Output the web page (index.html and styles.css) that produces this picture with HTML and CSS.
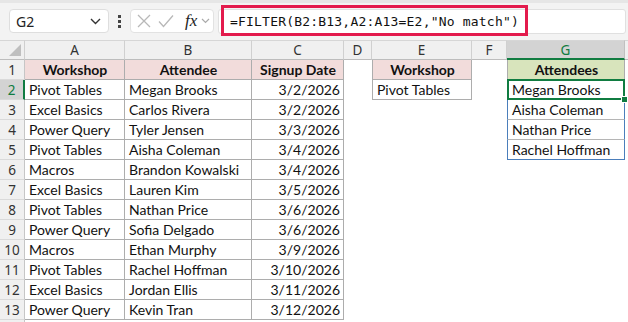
FILE: index.html
```html
<!DOCTYPE html>
<html>
<head>
<meta charset="utf-8">
<link rel="stylesheet" href="styles.css">
</head>
<body>
<div class="toolbar">
  <div class="namebox"><span>G2</span>
    <svg width="11" height="7" viewBox="0 0 11 7"><path d="M1 1 L5.5 5.5 L10 1" fill="none" stroke="#333" stroke-width="1.4"/></svg>
  </div>
  <div class="dots"><i></i><i></i><i></i></div>
  <div class="fxbtns">
    <svg width="14" height="14" viewBox="0 0 14 14"><path d="M1 1 L13 13 M13 1 L1 13" stroke="#b8b8b8" stroke-width="1.3" fill="none"/></svg>
    <svg width="16" height="14" viewBox="0 0 16 14"><path d="M1 7.5 L5.5 12.5 L15 1.5" stroke="#b8b8b8" stroke-width="1.3" fill="none"/></svg>
    <span class="fx">fx</span>
    <svg width="9" height="6" viewBox="0 0 9 6"><path d="M1 1 L4.5 4.5 L8 1" fill="none" stroke="#aaa" stroke-width="1.2"/></svg>
  </div>
  <div class="formula">=FILTER(B2:B13,A2:A13=E2,"No match")</div>
  <div class="highlight"></div>
</div>
<div class="sheet">
  <div class="corner"><span class="tri"></span></div>
  <div class="ch">A</div><div class="ch">B</div><div class="ch">C</div><div class="ch">D</div><div class="ch">E</div><div class="ch">F</div><div class="ch sel">G</div><div class="ch end"></div>

  <div class="rh">1</div><div class="c t h1">Workshop</div><div class="c t h1">Attendee</div><div class="c t h1">Signup Date</div><div class="c"></div><div class="c t tl h1">Workshop</div><div class="c"></div><div class="c t tl hg">Attendees</div><div class="c"></div>

  <div class="rh sel">2</div><div class="c t">Pivot Tables</div><div class="c t">Megan Brooks</div><div class="c t r">3/2/2026</div><div class="c"></div><div class="c t tl">Pivot Tables</div><div class="c"></div><div class="c sp active">Megan Brooks</div><div class="c"></div>

  <div class="rh">3</div><div class="c t">Excel Basics</div><div class="c t">Carlos Rivera</div><div class="c t r">3/2/2026</div><div class="c"></div><div class="c"></div><div class="c"></div><div class="c sp">Aisha Coleman</div><div class="c"></div>

  <div class="rh">4</div><div class="c t">Power Query</div><div class="c t">Tyler Jensen</div><div class="c t r">3/3/2026</div><div class="c"></div><div class="c"></div><div class="c"></div><div class="c sp">Nathan Price</div><div class="c"></div>

  <div class="rh">5</div><div class="c t">Pivot Tables</div><div class="c t">Aisha Coleman</div><div class="c t r">3/4/2026</div><div class="c"></div><div class="c"></div><div class="c"></div><div class="c sp last">Rachel Hoffman</div><div class="c"></div>

  <div class="rh">6</div><div class="c t">Macros</div><div class="c t">Brandon Kowalski</div><div class="c t r">3/4/2026</div><div class="c"></div><div class="c"></div><div class="c"></div><div class="c"></div><div class="c"></div>

  <div class="rh">7</div><div class="c t">Excel Basics</div><div class="c t">Lauren Kim</div><div class="c t r">3/5/2026</div><div class="c"></div><div class="c"></div><div class="c"></div><div class="c"></div><div class="c"></div>

  <div class="rh">8</div><div class="c t">Pivot Tables</div><div class="c t">Nathan Price</div><div class="c t r">3/6/2026</div><div class="c"></div><div class="c"></div><div class="c"></div><div class="c"></div><div class="c"></div>

  <div class="rh">9</div><div class="c t">Power Query</div><div class="c t">Sofia Delgado</div><div class="c t r">3/6/2026</div><div class="c"></div><div class="c"></div><div class="c"></div><div class="c"></div><div class="c"></div>

  <div class="rh">10</div><div class="c t">Macros</div><div class="c t">Ethan Murphy</div><div class="c t r">3/9/2026</div><div class="c"></div><div class="c"></div><div class="c"></div><div class="c"></div><div class="c"></div>

  <div class="rh">11</div><div class="c t">Pivot Tables</div><div class="c t">Rachel Hoffman</div><div class="c t r">3/10/2026</div><div class="c"></div><div class="c"></div><div class="c"></div><div class="c"></div><div class="c"></div>

  <div class="rh">12</div><div class="c t">Excel Basics</div><div class="c t">Jordan Ellis</div><div class="c t r">3/11/2026</div><div class="c"></div><div class="c"></div><div class="c"></div><div class="c"></div><div class="c"></div>

  <div class="rh">13</div><div class="c t">Power Query</div><div class="c t">Kevin Tran</div><div class="c t r">3/12/2026</div><div class="c"></div><div class="c"></div><div class="c"></div><div class="c"></div><div class="c"></div>

  <div class="rh"></div><div class="c"></div><div class="c"></div><div class="c"></div><div class="c"></div><div class="c"></div><div class="c"></div><div class="c"></div><div class="c"></div>
</div>
</body>
</html>
```

FILE: styles.css
```css
html, body {
  margin: 0;
  padding: 0;
  background: #fff;
}
body {
  width: 628px;
  height: 322px;
  overflow: hidden;
}
.toolbar {
  position: relative;
  height: 40px;
  box-sizing: border-box;
  border-top: 3px solid #e6e6e6;
  background: #f3f3f3;
  display: flex;
  align-items: center;
  padding-left: 9px;
  padding-bottom: 1px;
}
.namebox {
  width: 100px;
  height: 24px;
  box-sizing: border-box;
  background: #fff;
  border: 1px solid #dedede;
  border-radius: 4px;
  display: flex;
  align-items: center;
  justify-content: space-between;
  padding: 0 7px 0 6px;
  font-family: "Noto Sans", sans-serif;
  font-size: 14px;
  color: #222;
}
.dots {
  width: 3px;
  margin-left: 9px;
  display: flex;
  flex-direction: column;
  gap: 2px;
}
.dots i {
  display: block;
  width: 3px;
  height: 3px;
  background: #444;
}
.fxbtns {
  margin-left: 9px;
  width: 84px;
  height: 24px;
  box-sizing: border-box;
  background: #fff;
  border: 1px solid #e2e2e2;
  border-radius: 4px;
  display: flex;
  align-items: center;
  padding-left: 6px;
  gap: 7px;
}
.fx {
  font-family: "Liberation Serif", serif;
  font-style: italic;
  font-size: 17px;
  color: #222;
  margin-left: 4px;
  margin-right: -3px;
}
.formula {
  margin-left: 4px;
  margin-right: 2px;
  flex: 1;
  height: 25px;
  box-sizing: border-box;
  background: #fff;
  border: 1px solid #e0e0e0;
  border-radius: 3px;
  padding-left: 11px;
  font-family: "DejaVu Sans Mono", monospace;
  font-size: 13px;
  letter-spacing: 0.2px;
  line-height: 23px;
  color: #111;
  white-space: nowrap;
  overflow: hidden;
}
.highlight {
  position: absolute;
  left: 221px;
  top: 2px;
  width: 307px;
  height: 31px;
  box-sizing: border-box;
  border: 3px solid #e31b4d;
}
.sheet {
  display: grid;
  grid-template-columns: 25px 100px 127px 92px 28px 100px 35px 118px 1fr;
  grid-auto-rows: 20px;
}
.corner, .ch, .rh {
  background: #f0f0f0;
  box-sizing: border-box;
  font-family: "Noto Sans", sans-serif;
  font-size: 13.5px;
  color: #333;
  display: flex;
  align-items: center;
  justify-content: center;
}
.corner {
  position: relative;
  border-right: 1px solid #cfcfcf;
  border-bottom: 1px solid #bdbdbd;
  border-top: 1px solid #d6d6d6;
}
.tri {
  position: absolute;
  right: 3px;
  bottom: 3px;
  width: 12px;
  height: 12px;
  background: #bfbfbf;
  clip-path: polygon(100% 0, 100% 100%, 0 100%);
}
.ch {
  border-right: 1px solid #d0d0d0;
  border-bottom: 1px solid #bdbdbd;
  border-top: 1px solid #d6d6d6;
}
.ch.end {
  border-right: none;
}
.ch.sel {
  background: #d3d3d3;
  color: #107c41;
  border-bottom: 2px solid #107c41;
  border-right-color: #c0c0c0;
}
.rh {
  border-right: 1px solid #c6c6c6;
  border-bottom: 1px solid #dadada;
}
.rh.sel {
  background: #d3d3d3;
  color: #107c41;
  border-right: 2px solid #107c41;
}
.c {
  box-sizing: border-box;
  font-family: "Lato", sans-serif;
  font-size: 14px;
  line-height: 20px;
  color: #111;
  padding: 0 3px 0 4px;
  white-space: nowrap;
  overflow: visible;
  position: relative;
}
.t {
  border-right: 1px solid #adadad;
  border-bottom: 1px solid #adadad;
}
.tl {
  border-left: 1px solid #adadad;
}
.r {
  text-align: right;
  padding-right: 3px;
}
.h1 {
  background: #f2dcdb;
  font-weight: 700;
  text-align: center;
}
.hg {
  background: #d8e4bc;
  font-weight: 700;
  text-align: center;
}
.sp {
  border-left: 1px solid #4a7ebb;
  border-right: 1px solid #4a7ebb;
  border-bottom: 1px solid #b5b5b5;
}
.sp.last {
  border-bottom: 1px solid #4a7ebb;
}
.active::after {
  content: "";
  position: absolute;
  left: -1px;
  top: -1px;
  right: -1px;
  bottom: -1px;
  border: 2px solid #107c41;
}
.active::before {
  content: "";
  position: absolute;
  right: -4px;
  bottom: -4px;
  width: 5px;
  height: 5px;
  background: #107c41;
  border: 1px solid #fff;
  z-index: 2;
}
```
